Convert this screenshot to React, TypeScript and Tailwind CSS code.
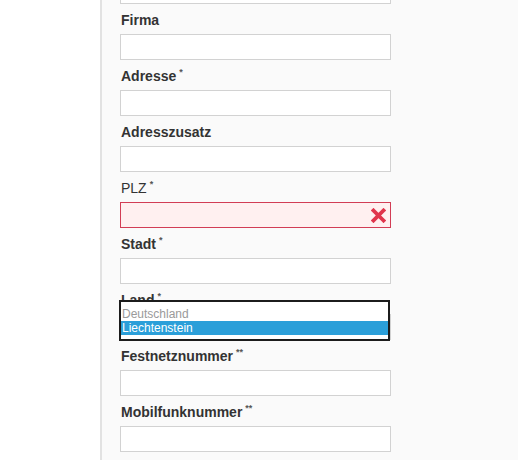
import React from "react";

function Req({ s = "*" }: { s?: string }) {
  return <span className="ml-[3px] align-top text-[9px] leading-[13px] font-bold text-[#555]">{s}</span>;
}

function Label({ children }: { children: React.ReactNode }) {
  return (
    <div className="mt-[6px] mb-[4px] h-[20px] pl-[1px] text-[14px] leading-[20px] font-bold text-[#333]">
      {children}
    </div>
  );
}

function Input() {
  return <div className="h-[26px] w-[271px] border border-[#d2d2d2] bg-white" />;
}

export default function App() {
  return (
    <div
      className="flex h-[460px] w-[518px] overflow-hidden bg-white"
      style={{ fontFamily: '"Liberation Sans", Arial, sans-serif' }}
    >
      <div className="w-[100px] shrink-0 bg-white" />
      <div className="w-[2px] shrink-0 bg-[#e2e2e2]" />
      <div className="flex-1 bg-[#fafafa] pl-[18px]">
        <div className="-mt-[22px]">
          <Input />
        </div>
        <Label>Firma</Label>
        <Input />
        <Label>
          Adresse<Req />
        </Label>
        <Input />
        <Label>Adresszusatz</Label>
        <Input />
        <Label>
          <span className="font-normal">PLZ</span>
          <Req />
        </Label>
        <div className="relative h-[26px] w-[271px] border border-[#d23d55] bg-[#fff0f0]">
          <svg
            className="absolute right-[4px] top-[5px]"
            width="15"
            height="15"
            viewBox="0 0 15 15"
          >
            <path d="M2.5 2.5 L12.5 12.5 M12.5 2.5 L2.5 12.5" stroke="#e0354c" strokeWidth="3.8" strokeLinecap="square" />
          </svg>
        </div>
        <Label>
          Stadt<Req />
        </Label>
        <Input />
        <div className="relative">
          <Label>
            Land<Req />
          </Label>
          <Input />
          <div className="absolute left-[-1px] top-[10px] w-[271px] border-2 border-[#1c1c1c] bg-white pt-[5px] pb-[4px] text-[12px] leading-[14px]">
            <div className="h-[14px] pl-[1px] text-[#9a9a9a]">Deutschland</div>
            <div className="h-[14px] bg-[#2b9fd9] pl-[1px] text-white">Liechtenstein</div>
          </div>
        </div>
        <Label>
          Festnetznummer<Req s="**" />
        </Label>
        <Input />
        <Label>
          Mobilfunknummer<Req s="**" />
        </Label>
        <Input />
      </div>
    </div>
  );
}
